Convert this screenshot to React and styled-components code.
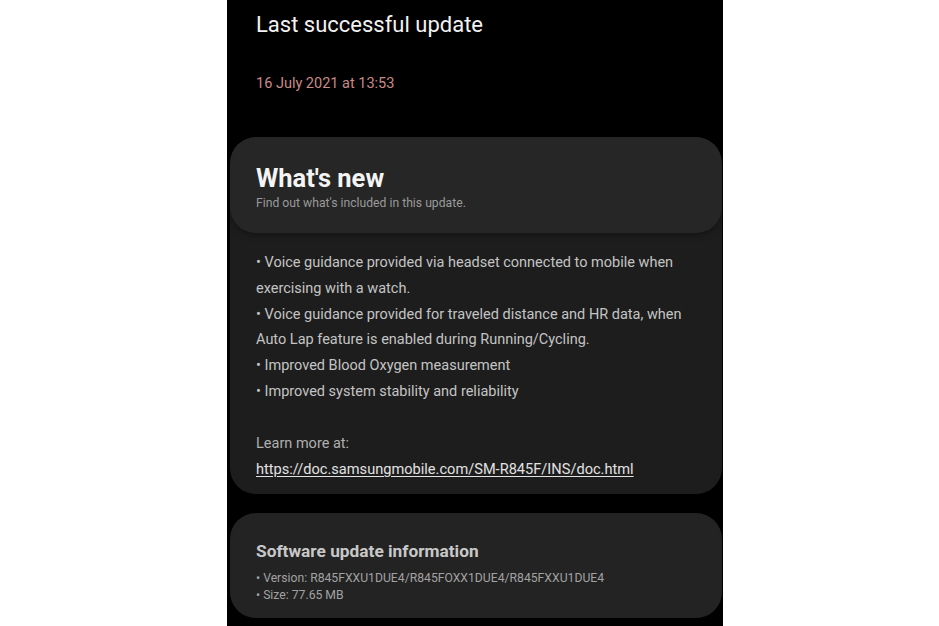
import styled, { createGlobalStyle } from 'styled-components';

const GlobalStyle = createGlobalStyle`
    html, body {
        margin: 0;
        padding: 0;
        background: #fff;
    }
    body {
        font-family: Roboto, 'Noto Sans', sans-serif;
    }
`;

const notes = [
    '• Voice guidance provided via headset connected to mobile when exercising with a watch.',
    '• Voice guidance provided for traveled distance and HR data, when Auto Lap feature is enabled during Running/Cycling.',
    '• Improved Blood Oxygen measurement',
    '• Improved system stability and reliability',
];

const App = () => {
    return (
        <>
            <GlobalStyle />
            <S.Page>
                <S.Screen>
                    <S.Top>
                        <S.Title>Last successful update</S.Title>
                        <S.Date>16 July 2021 at 13:53</S.Date>
                    </S.Top>

                    <S.Card $tone='#1d1d1d'>
                        <S.Header>
                            <S.Heading>What's new</S.Heading>
                            <S.Sub>Find out what's included in this update.</S.Sub>
                        </S.Header>
                        <S.Body>
                            {notes.map((n) => (
                                <S.Line key={n}>{n}</S.Line>
                            ))}
                            <S.Learn>Learn more at:</S.Learn>
                            <S.Link href='#'>https://doc.samsungmobile.com/SM-R845F/INS/doc.html</S.Link>
                        </S.Body>
                    </S.Card>

                    <S.Card $tone='#232323' $gap>
                        <S.Info>
                            <S.InfoTitle>Software update information</S.InfoTitle>
                            <S.InfoLine>• Version: R845FXXU1DUE4/R845FOXX1DUE4/R845FXXU1DUE4</S.InfoLine>
                            <S.InfoLine>• Size: 77.65 MB</S.InfoLine>
                        </S.Info>
                    </S.Card>
                </S.Screen>
            </S.Page>
        </>
    );
};

const S = {};
S.Page = styled.div`
    width: 939px;
    height: 626px;
    background: #fff;
    overflow: hidden;
`;

S.Screen = styled.div`
    margin-left: 227px;
    width: 496px;
    height: 626px;
    background: #000;
    display: flex;
    flex-direction: column;
`;

S.Top = styled.div`
    padding: 12px 0 0 29px;
    height: 137px;
    flex-shrink: 0;
    box-sizing: border-box;
`;

S.Title = styled.div`
    font-size: 22px;
    line-height: 26px;
    color: #f2f2f2;
`;

S.Date = styled.div`
    margin-top: 36px;
    font-size: 14.5px;
    line-height: 20px;
    color: #c98a88;
`;

S.Card = styled.div`
    margin: ${(p) => (p.$gap ? '19px' : '0')} 1px 0 3px;
    background: ${(p) => p.$tone};
    border-radius: 26px;
    overflow: hidden;
    flex-shrink: 0;
`;

S.Header = styled.div`
    background: #262626;
    border-radius: 26px;
    box-shadow: 0 2px 6px rgba(0, 0, 0, 0.35);
    padding: 26px 26px 22px;
`;

S.Heading = styled.div`
    font-size: 25.5px;
    line-height: 30px;
    font-weight: 700;
    color: #f4f4f4;
`;

S.Sub = styled.div`
    margin-top: 2px;
    font-size: 12.2px;
    line-height: 16px;
    color: #9a9a9a;
`;

S.Body = styled.div`
    padding: 17px 26px 11px;
    font-size: 14.5px;
    line-height: 25.8px;
    color: #c4c4c4;
`;

S.Line = styled.div``;

S.Learn = styled.div`
    margin-top: 26.5px;
    color: #b0b0b0;
`;

S.Link = styled.a`
    display: block;
    color: #e2e2e2;
    font-size: 14.6px;
    text-decoration: underline;
    text-underline-offset: 2px;
`;

S.Info = styled.div`
    padding: 27px 26px 14px;
`;

S.InfoTitle = styled.div`
    font-size: 17.3px;
    line-height: 22px;
    font-weight: 700;
    color: #c8c8c8;
    margin-bottom: 8px;
`;

S.InfoLine = styled.div`
    font-size: 12.2px;
    line-height: 17px;
    color: #a2a2a2;
`;

export default App;
